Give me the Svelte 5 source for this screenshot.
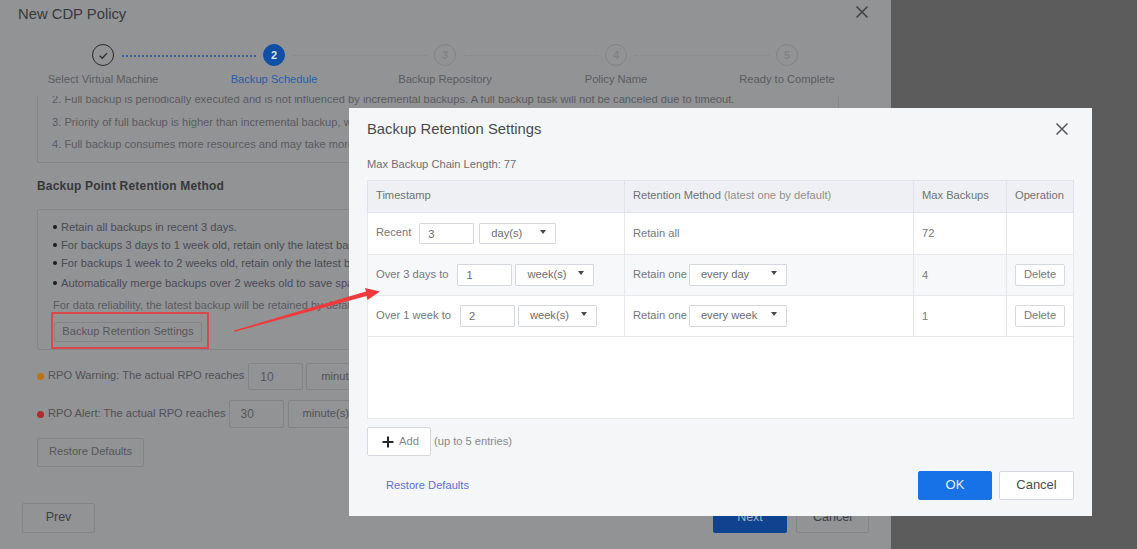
<script>
  const steps = [
    { label: 'Select Virtual Machine', state: 'done' },
    { label: 'Backup Schedule', state: 'active' },
    { label: 'Backup Repository', state: 'todo' },
    { label: 'Policy Name', state: 'todo' },
    { label: 'Ready to Complete', state: 'todo' }
  ];
  const notes = [
    '2. Full backup is periodically executed and is not influenced by incremental backups. A full backup task will not be canceled due to timeout.',
    '3. Priority of full backup is higher than incremental backup, which',
    '4. Full backup consumes more resources and may take more'
  ];
  const bullets = [
    'Retain all backups in recent 3 days.',
    'For backups 3 days to 1 week old, retain only the latest backup of each day.',
    'For backups 1 week to 2 weeks old, retain only the latest backup of each week.',
    'Automatically merge backups over 2 weeks old to save space.'
  ];
</script>

<div class="page">
  <section class="panel">
    <header class="panel-head">
      <h1>New CDP Policy</h1>
      <svg class="x" viewBox="0 0 14 14"><path d="M1.5 1.5l11 11M12.5 1.5l-11 11" /></svg>
    </header>

    <div class="stepper">
      <div class="track">
        {#each steps as s, i}
          <div class="circle {s.state}">
            {#if s.state === 'done'}
              <svg viewBox="0 0 22 22"><path d="M6.5 11.300l3 2.900 5.600-6" /></svg>
            {:else}
              {i + 1}
            {/if}
          </div>
          {#if i < steps.length - 1}
            <div class="line" class:blue={i === 0}></div>
          {/if}
        {/each}
      </div>
      <div class="labels">
        {#each steps as s}
          <span class:cur={s.state === 'active'}>{s.label}</span>
        {/each}
      </div>
    </div>

    <div class="scroll">
      <div class="box notes">
        {#each notes as n}<p>{n}</p>{/each}
      </div>

      <h2>Backup Point Retention Method</h2>

      <div class="box method">
        <ul>
          {#each bullets as b}<li>{b}</li>{/each}
        </ul>
        <p class="reliab">For data reliability, the latest backup will be retained by default.</p>
        <div class="highlight">
          <button class="btn retention">Backup Retention Settings</button>
        </div>
      </div>

      <div class="rpo first">
        <i class="dot orange"></i>
        <span>RPO Warning: The actual RPO reaches</span>
        <input class="num" value="10" />
        <div class="unit">minute(s)</div>
      </div>
      <div class="rpo second">
        <i class="dot red"></i>
        <span>RPO Alert: The actual RPO reaches</span>
        <input class="num" value="30" />
        <div class="unit">minute(s)</div>
      </div>

      <button class="btn restore">Restore Defaults</button>
    </div>

    <footer class="panel-foot">
      <button class="btn big">Prev</button>
      <div class="foot-right">
        <button class="btn big next">Next</button>
        <button class="btn big">Cancel</button>
      </div>
    </footer>
  </section>

  <div class="modal">
    <div class="modal-head">
      <h3>Backup Retention Settings</h3>
      <svg class="x dark" viewBox="0 0 14 14"><path d="M1.5 1.5l11 11M12.5 1.5l-11 11" /></svg>
    </div>
    <p class="chain">Max Backup Chain Length: 77</p>

    <table>
      <thead>
        <tr>
          <th class="c1">Timestamp</th>
          <th class="c2">Retention Method <em>(latest one by default)</em></th>
          <th class="c3">Max Backups</th>
          <th class="c4">Operation</th>
        </tr>
      </thead>
      <tbody>
        <tr class="r1">
          <td><div class="cell r-recent"><span>Recent</span><input class="m-in" value="3" /><div class="sel s-day">day(s)</div></div></td>
          <td class="up">Retain all</td>
          <td class="up">72</td>
          <td></td>
        </tr>
        <tr class="r2 alt">
          <td><div class="cell"><span>Over 3 days to</span><input class="m-in" value="1" /><div class="sel s-week">week(s)</div></div></td>
          <td><div class="cell keep"><span>Retain one</span><div class="sel s-every">every day</div></div></td>
          <td>4</td>
          <td><button class="btn del">Delete</button></td>
        </tr>
        <tr class="r3">
          <td><div class="cell"><span>Over 1 week to</span><input class="m-in" value="2" /><div class="sel s-week">week(s)</div></div></td>
          <td><div class="cell keep"><span>Retain one</span><div class="sel s-every">every week</div></div></td>
          <td>1</td>
          <td><button class="btn del">Delete</button></td>
        </tr>
        <tr class="filler"><td colspan="4"></td></tr>
      </tbody>
    </table>

    <div class="add-row">
      <button class="btn add">
        <svg viewBox="0 0 12 12"><path d="M6 0.500v11M0.500 6h11" /></svg>
        Add
      </button>
      <span>(up to 5 entries)</span>
    </div>

    <div class="modal-foot">
      <span class="link">Restore Defaults</span>
      <div class="foot-right">
        <button class="btn ok">OK</button>
        <button class="btn cancel">Cancel</button>
      </div>
    </div>
  </div>

  <svg class="arrow" viewBox="0 0 1137 549">
    <path d="M234 330.500L366 291.500L365 288L380 291.500L367.500 300L366.500 296L234.500 331.800Z" />
  </svg>
</div>

<style>
  :global(body) {
    margin: 0;
    background: #5c5c5c;
  }
  * {
    box-sizing: border-box;
  }
  .page {
    position: relative;
    width: 1137px;
    height: 549px;
    overflow: hidden;
    background: #5c5c5c;
    font-family: "Liberation Sans", Arial, sans-serif;
    font-size: 11.15px;
    color: #56575b;
  }
  .panel {
    width: 891px;
    height: 549px;
    background: #929395;
  }
  .panel-head {
    height: 28px;
    padding: 0 22px 0 18px;
    display: flex;
    align-items: center;
    justify-content: space-between;
  }
  h1 {
    margin: 0;
    font-size: 14.8px;
    font-weight: 400;
    color: #38393c;
  }
  .x {
    width: 14px;
    height: 14px;
    position: relative;
    top: -2px;
  }
  .x path {
    fill: none;
    stroke: #3f4043;
    stroke-width: 1.5;
  }
  .x.dark path {
    stroke: #55565a;
  }
  .stepper {
    height: 68px;
    padding-top: 16px;
  }
  .track {
    display: flex;
    align-items: center;
    padding-left: 92px;
    height: 22px;
  }
  .circle {
    width: 22px;
    height: 22px;
    flex: none;
    border-radius: 50%;
    border: 1.5px solid #828386;
    color: #828386;
    display: flex;
    align-items: center;
    justify-content: center;
    font-size: 11px;
    font-weight: 700;
  }
  .circle.done {
    border-color: #2a2b2e;
  }
  .circle.done svg {
    width: 19px;
    height: 19px;
    fill: none;
    stroke: #2f3033;
    stroke-width: 1.5;
  }
  .circle.active {
    background: #0f4fa6;
    border-color: #0f4fa6;
    color: #dfe3ea;
  }
  .line {
    flex: none;
    width: 134px;
    margin: 1px 7px 0 8px;
    border-top: 1px dotted #86878a;
  }
  .line.blue {
    border-top: 2px dotted #2a62b8;
  }
  .labels {
    display: grid;
    grid-template-columns: repeat(5, 171px);
    padding-left: 17.500px;
    margin-top: 6px;
    line-height: 14px;
    text-align: center;
    color: #5b5c60;
  }
  .labels .cur {
    color: #2b5ea8;
  }
  .scroll {
    height: 399px;
    padding: 0 52px 0 37px;
    overflow: hidden;
  }
  .box {
    border: 1px solid #848588;
    border-radius: 2px;
  }
  .notes {
    margin-top: -9px;
    height: 76px;
    padding-left: 14px;
    white-space: nowrap;
  }
  .notes p {
    margin: 0;
    line-height: 22.500px;
    color: #5a5b60;
  }
  h2 {
    margin: 13px 0 0;
    height: 20px;
    line-height: 20px;
    font-size: 12px;
    font-weight: 700;
    letter-spacing: 0.2px;
    color: #37383b;
  }
  .method {
    margin-top: 13px;
    height: 141px;
    padding: 8px 15px 0;
  }
  ul {
    margin: 0;
    padding: 0 0 0 8px;
    list-style: none;
  }
  li {
    position: relative;
    line-height: 18px;
    color: #4a4b55;
    white-space: nowrap;
  }
  li::before {
    content: "";
    position: absolute;
    left: -8px;
    top: 7px;
    width: 4px;
    height: 4px;
    border-radius: 50%;
    background: #1d1d20;
  }
  li:last-child {
    margin-top: 2px;
  }
  .reliab {
    margin: 4px 0 0;
    line-height: 18px;
    color: #5a5b60;
    white-space: nowrap;
  }
  .highlight {
    width: 158px;
    height: 37px;
    margin: -2px 0 0 -2px;
    padding: 9px 0 0 2px;
    border: 2px solid #d9494c;
  }
  .btn {
    font-family: inherit;
    font-size: 11.15px;
    color: #56575b;
    background: transparent;
    border: 1.500px solid #838487;
    border-radius: 2px;
    padding: 0 0 2px;
    display: block;
  }
  .retention {
    width: 148px;
    height: 20px;
    margin-top: -1.500px;
    margin-left: -1px;
  }
  .rpo {
    display: flex;
    align-items: center;
    height: 27px;
    white-space: nowrap;
    color: #505155;
  }
  .rpo.first {
    margin-top: 13px;
  }
  .rpo.second {
    margin-top: 10px;
    height: 28px;
  }
  .rpo span {
    padding-bottom: 3px;
  }
  .rpo.first .num {
    margin-left: 4px;
  }
  .rpo.second .num {
    margin-left: 3px;
  }
  .rpo.second .unit {
    margin-left: 4px;
  }
  .dot {
    width: 7px;
    height: 7px;
    flex: none;
    border-radius: 50%;
    margin-right: 4px;
  }
  .dot.orange {
    background: #bd7410;
  }
  .dot.red {
    background: #ad2b2f;
  }
  .num {
    width: 55px;
    height: 100%;
    flex: none;
    padding: 0 0 0 11px;
    font: inherit;
    font-size: 12px;
    color: #56575b;
    background: transparent;
    border: 1.500px solid #838487;
    border-radius: 2px;
    outline: none;
  }
  .unit {
    width: 100px;
    height: 100%;
    flex: none;
    margin-left: 3px;
    padding-left: 14px;
    line-height: 25px;
    border: 1.500px solid #838487;
    border-radius: 2px;
  }
  .restore {
    width: 107px;
    height: 29px;
    margin-top: 10px;
    padding-bottom: 4px;
  }
  .panel-foot {
    display: flex;
    justify-content: space-between;
    padding: 8px 22px 0;
  }
  .foot-right {
    display: flex;
    gap: 9px;
  }
  .big {
    width: 73px;
    height: 30px;
    font-size: 12.500px;
    color: #3f4043;
  }
  .next {
    width: 74px;
    background: #0f438f;
    border-color: #0f438f;
    color: #9fb3d0;
  }
  .modal {
    position: absolute;
    left: 349px;
    top: 108px;
    width: 743px;
    height: 408px;
    padding: 0 18px;
    background: #f5f6f8;
    color: #7b7c80;
  }
  .modal-head {
    height: 42px;
    display: flex;
    align-items: center;
    justify-content: space-between;
  }
  h3 {
    margin: 0;
    font-size: 14.8px;
    font-weight: 400;
    color: #4a4b4f;
  }
  .modal-head .x {
    margin-right: 5px;
    top: 0;
  }
  .chain {
    margin: 7px 0 0;
    height: 14px;
    line-height: 14px;
    color: #6e6f73;
  }
  table {
    margin-top: 9px;
    width: 706px;
    table-layout: fixed;
    border-collapse: collapse;
    border: 1px solid #dfe2e8;
    background: #fff;
  }
  th, td {
    border: 1px solid #e6e8ed;
    padding: 0 0 0 8px;
    font-weight: 400;
    text-align: left;
    white-space: nowrap;
    color: #77787c;
  }
  th {
    height: 32px;
    padding-bottom: 3px;
    background: #eff0f3;
    border-color: #dfe2e8;
    color: #727377;
  }
  th em {
    font-style: normal;
    color: #8f9094;
  }
  td.up {
    padding-bottom: 2px;
  }
  .c1 { width: 257px; }
  .c2 { width: 289px; }
  .c3 { width: 93px; }
  .c4 { width: 67px; }
  .r1 { height: 42px; }
  .r2, .r3 { height: 41px; }
  .alt td { background: #f7f8fa; }
  .filler { height: 82px; }
  .filler td { border-top: 1px solid #e6e8ed; }
  .cell {
    display: flex;
    align-items: center;
  }
  .cell span {
    margin-right: 9px;
    padding-bottom: 3px;
  }
  .r-recent span {
    margin-right: 8px;
  }
  .r-recent .sel {
    margin-left: 5px;
  }
  .keep span {
    margin-right: 0;
  }
  .m-in {
    width: 55px;
    height: 21.500px;
    padding: 0 0 0 8px;
    font: inherit;
    color: #6b6c70;
    background: #fff;
    border: 1.200px solid #d5d8df;
    border-radius: 1px;
    outline: none;
    flex: none;
  }
  .sel {
    position: relative;
    height: 21.500px;
    line-height: 18px;
    margin-left: 3px;
    padding-left: 11px;
    background: #fff;
    color: #6b6c70;
    border: 1.200px solid #d5d8df;
    border-radius: 1px;
    flex: none;
  }
  .keep .sel {
    margin-left: 2px;
  }
  .sel::after {
    content: "";
    position: absolute;
    right: 9px;
    top: 6px;
    border: 3px solid transparent;
    border-top: 4px solid #47484c;
    border-bottom: 0;
  }
  .s-day { width: 77px; }
  .s-week { width: 79px; }
  .s-every { width: 98px; }
  .del {
    width: 50px;
    height: 21.500px;
    padding-bottom: 3px;
    background: #fff;
    border: 1.200px solid #d5d8df;
    color: #77787c;
  }
  .add-row {
    display: flex;
    align-items: center;
    margin-top: 8px;
    height: 29px;
    color: #88898d;
  }
  .add-row span {
    margin-left: 3px;
    padding-bottom: 2px;
  }
  .add {
    width: 64px;
    height: 29px;
    display: flex;
    align-items: center;
    gap: 5px;
    padding-left: 14px;
    background: #fff;
    border: 1.200px solid #d5d8df;
    color: #85868a;
  }
  .add svg {
    width: 12px;
    height: 12px;
    flex: none;
    position: relative;
    top: 1px;
  }
  .add path {
    stroke: #25262a;
    stroke-width: 2;
    fill: none;
  }
  .modal-foot {
    display: flex;
    align-items: center;
    justify-content: space-between;
    margin-top: 15px;
    padding-left: 19px;
  }
  .link {
    color: #5d6fd6;
    padding-bottom: 1px;
  }
  .modal-foot .foot-right {
    gap: 7px;
  }
  .ok, .cancel {
    width: 75px;
    height: 29px;
    font-size: 13px;
  }
  .ok {
    width: 74px;
    background: #1672e6;
    border-color: #1672e6;
    color: #e8f1fd;
  }
  .cancel {
    background: #fff;
    border: 1.200px solid #d5d8df;
    color: #4a4b4f;
  }
  .arrow {
    position: absolute;
    inset: 0;
    width: 1137px;
    height: 549px;
    pointer-events: none;
  }
  .arrow path {
    fill: #ee3a3c;
  }
</style>
